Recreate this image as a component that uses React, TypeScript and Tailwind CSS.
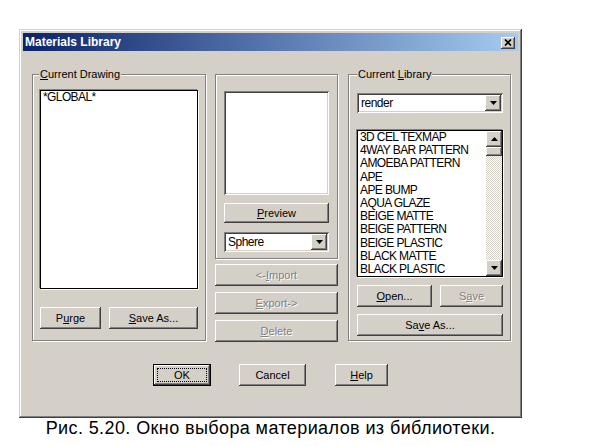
import React from "react";

const raised =
  "shadow-[inset_-1px_-1px_#404040,inset_1px_1px_#fff,inset_-2px_-2px_#808080,inset_2px_2px_#d4d0c8]";
const sunken =
  "shadow-[inset_1px_1px_#808080,inset_-1px_-1px_#fff,inset_2px_2px_#404040,inset_-2px_-2px_#d4d0c8]";
const etched = "border border-[#808080] shadow-[1px_1px_0_#fff,inset_1px_1px_0_#fff]";

const Arrow = ({ up }: { up?: boolean }) => (
  <svg width="7" height="4" viewBox="0 0 7 4">
    <polygon points={up ? "3.5,0 7,4 0,4" : "0,0 7,0 3.5,4"} fill="#000" />
  </svg>
);

const Button = (props: any) => (
  <div
    className={`${raised} ${props.className} flex items-center justify-center bg-[#d4d0c8] text-[11px] leading-none ${
      props.disabled ? "text-[#808080] [text-shadow:1px_1px_0_#fff]" : "text-black"
    }`}
  >
    <span>{props.children}</span>
  </div>
);

const Combo = (props: any) => (
  <div className={`${sunken} ${props.className} flex items-stretch bg-white p-[2px]`}>
    <span className="flex-1 flex items-center pl-[2px] text-[12px] tracking-[-0.5px]">{props.value}</span>
    <div className={`${raised} w-[16px] bg-[#d4d0c8] flex items-center justify-center`}>
      <Arrow />
    </div>
  </div>
);

const items = [
  "3D CEL TEXMAP",
  "4WAY BAR PATTERN",
  "AMOEBA PATTERN",
  "APE",
  "APE BUMP",
  "AQUA GLAZE",
  "BEIGE MATTE",
  "BEIGE PATTERN",
  "BEIGE PLASTIC",
  "BLACK MATTE",
  "BLACK PLASTIC",
];

export default function App() {
  return (
    <div className="w-[603px] h-[446px] bg-white overflow-hidden font-['Liberation_Sans',Arial,sans-serif] text-black">
      <div className="pt-[29px] pl-[19px]">
        <div className="w-[503px] h-[389px] bg-[#d4d0c8] p-[4px] flex flex-col shadow-[inset_-1px_-1px_#404040,inset_1px_1px_#d4d0c8,inset_-2px_-2px_#808080,inset_2px_2px_#fff]">
          {/* title bar */}
          <div className="h-[18px] flex items-center justify-between bg-[linear-gradient(to_right,#0a246a,#a6caf0)] pl-[2px] pr-[3px]">
            <span className="text-white font-bold text-[12px] leading-none">Materials Library</span>
            <div className={`${raised} w-[14px] h-[12px] mt-[1px] bg-[#d4d0c8] flex items-center justify-center`}>
              <svg width="8" height="7" viewBox="0 0 8 7">
                <path d="M1 0.5l6 6M7 0.5l-6 6" stroke="#000" strokeWidth="1.7" />
              </svg>
            </div>
          </div>

          {/* groups */}
          <div className="flex items-start pt-[23px] pl-[9px]">
            {/* Current Drawing */}
            <div className={`relative ${etched} w-[174px] h-[267px] flex flex-col items-start pl-[7px] pt-[15px]`}>
              <span className="absolute left-[6px] top-[-7px] bg-[#d4d0c8] px-[1px] text-[11px] leading-[13px]">
                <span className="underline">C</span>urrent Drawing
              </span>
              <div className="w-[158px] h-[199px] bg-white border border-black shadow-[-1px_-1px_0_#808080,1px_1px_0_#fff] pl-[2px] text-[12px] leading-[13.2px] tracking-[-0.6px]">
                *GLOBAL*
              </div>
              <div className="flex gap-[8px] mt-[18px]">
                <Button className="w-[61px] h-[22px]">
                  P<span className="underline">u</span>rge
                </Button>
                <Button className="w-[89px] h-[22px]">
                  <span className="underline">S</span>ave As...
                </Button>
              </div>
            </div>

            {/* middle column */}
            <div className="ml-[9px] w-[123px] flex flex-col">
              <div className={`${etched} h-[185px] flex flex-col items-start pl-[8px] pt-[16px]`}>
                <div className={`${sunken} w-[105px] h-[104px] bg-white`} />
                <Button className="w-[105px] h-[20px] mt-[8px]">
                  <span className="underline">P</span>review
                </Button>
                <Combo className="w-[105px] h-[20px] mt-[9px]" value="Sphere" />
              </div>
              <Button disabled className="h-[22px] mt-[5px]">
                &lt;-<span className="underline">I</span>mport
              </Button>
              <Button disabled className="h-[22px] mt-[6px]">
                <span className="underline">E</span>xport-&gt;
              </Button>
              <Button disabled className="h-[22px] mt-[6px]">
                <span className="underline">D</span>elete
              </Button>
            </div>

            {/* Current Library */}
            <div className={`relative ${etched} ml-[10px] w-[163px] h-[267px] flex flex-col items-start pl-[8px] pt-[18px]`}>
              <span className="absolute left-[8px] top-[-7px] bg-[#d4d0c8] px-[1px] text-[11px] leading-[13px]">
                Current <span className="underline">L</span>ibrary
              </span>
              <Combo className="w-[146px] h-[20px]" value="render" />
              <div className="mt-[17px] w-[146px] h-[147px] bg-white border border-black shadow-[-1px_-1px_0_#808080,1px_1px_0_#fff] flex">
                <div className="flex-1 pl-[2px] text-[12px] leading-[13.2px] tracking-[-0.6px] overflow-hidden">
                  {items.map((it) => (
                    <div key={it} className="whitespace-nowrap">
                      {it}
                    </div>
                  ))}
                </div>
                <div className="w-[16px] flex flex-col">
                  <div className={`${raised} h-[16px] bg-[#d4d0c8] flex items-center justify-center`}>
                    <Arrow up />
                  </div>
                  <div className={`${raised} h-[9px] bg-[#d4d0c8]`} />
                  <div className="flex-1 [background:repeating-conic-gradient(#fff_0_25%,#d4d0c8_0_50%)_0_0/2px_2px]" />
                  <div className={`${raised} h-[16px] bg-[#d4d0c8] flex items-center justify-center`}>
                    <Arrow />
                  </div>
                </div>
              </div>
              <div className="flex gap-[8px] mt-[8px]">
                <Button className="w-[75px] h-[22px]">
                  <span className="underline">O</span>pen...
                </Button>
                <Button disabled className="w-[63px] h-[22px]">
                  S<span className="underline">a</span>ve
                </Button>
              </div>
              <Button className="w-[146px] h-[22px] mt-[7px]">
                Sa<span className="underline">v</span>e As...
              </Button>
            </div>
          </div>

          {/* dialog buttons */}
          <div className="flex justify-center mt-[22px]">
            <div className="w-[58px] h-[22px] border border-black">
              <div className={`${raised} relative h-full flex items-center justify-center text-[11px] leading-none`}>
                <span className="absolute inset-[3px] border border-dotted border-black" />
                OK
              </div>
            </div>
            <Button className="w-[67px] h-[22px] ml-[28px]">Cancel</Button>
            <Button className="w-[53px] h-[22px] ml-[29px]">
              <span className="underline">H</span>elp
            </Button>
          </div>
        </div>

        <div className="w-[503px] text-center text-[18px] leading-[20px] tracking-[0.4px]">
          Рис. 5.20. Окно выбора материалов из библиотеки.
        </div>
      </div>
    </div>
  );
}
